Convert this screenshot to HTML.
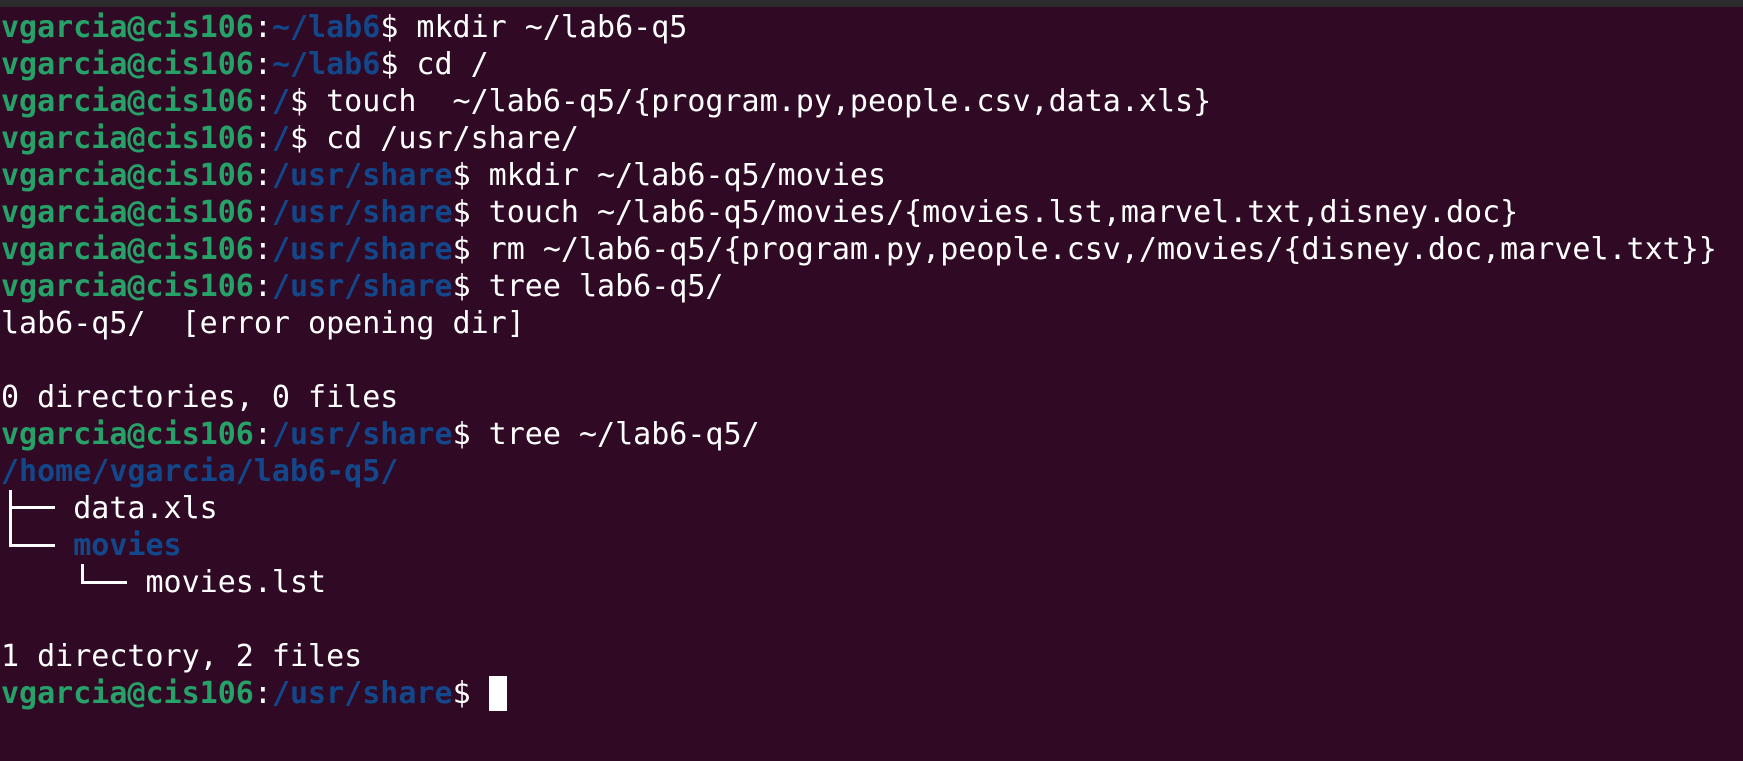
<!DOCTYPE html>
<html><head><meta charset="utf-8"><style>
html,body{margin:0;padding:0;}
body{width:1743px;height:761px;background:#300a24;overflow:hidden;position:relative;}
.bar{position:absolute;left:0;top:0;width:1743px;height:7px;background:#2c2c2c;z-index:2;}
pre{position:absolute;left:1px;top:8.5px;margin:0;font-family:"DejaVu Sans Mono","Liberation Mono",monospace;font-size:30px;line-height:37px;color:#ffffff;white-space:pre;}
.g{color:#26a269;font-weight:bold;}
.b{color:#12488b;font-weight:bold;}
.t{color:transparent;}
.c{display:inline-block;width:18px;height:35px;background:#fff;vertical-align:-8px;}
.l{position:absolute;background:#fff;}
</style></head><body>
<div class="bar"></div>
<pre><span class="g">vgarcia@cis106</span>:<span class="b">~/lab6</span>$ mkdir ~/lab6-q5
<span class="g">vgarcia@cis106</span>:<span class="b">~/lab6</span>$ cd /
<span class="g">vgarcia@cis106</span>:<span class="b">/</span>$ touch  ~/lab6-q5/{program.py,people.csv,data.xls}
<span class="g">vgarcia@cis106</span>:<span class="b">/</span>$ cd /usr/share/
<span class="g">vgarcia@cis106</span>:<span class="b">/usr/share</span>$ mkdir ~/lab6-q5/movies
<span class="g">vgarcia@cis106</span>:<span class="b">/usr/share</span>$ touch ~/lab6-q5/movies/{movies.lst,marvel.txt,disney.doc}
<span class="g">vgarcia@cis106</span>:<span class="b">/usr/share</span>$ rm ~/lab6-q5/{program.py,people.csv,/movies/{disney.doc,marvel.txt}}
<span class="g">vgarcia@cis106</span>:<span class="b">/usr/share</span>$ tree lab6-q5/
lab6-q5/  [error opening dir]

0 directories, 0 files
<span class="g">vgarcia@cis106</span>:<span class="b">/usr/share</span>$ tree ~/lab6-q5/
<span class="b">/home/vgarcia/lab6-q5/</span>
<span class="t">├──</span> data.xls
<span class="t">└──</span> <span class="b">movies</span>
    <span class="t">└──</span> movies.lst

1 directory, 2 files
<span class="g">vgarcia@cis106</span>:<span class="b">/usr/share</span>$ <span class="c"></span></pre>
<div class="l" style="left:9px;top:490px;width:3px;height:57px"></div>
<div class="l" style="left:9px;top:506px;width:46px;height:3px"></div>
<div class="l" style="left:9px;top:544px;width:46px;height:3px"></div>
<div class="l" style="left:81px;top:564px;width:3px;height:20px"></div>
<div class="l" style="left:81px;top:581px;width:46px;height:3px"></div>
</body></html>
